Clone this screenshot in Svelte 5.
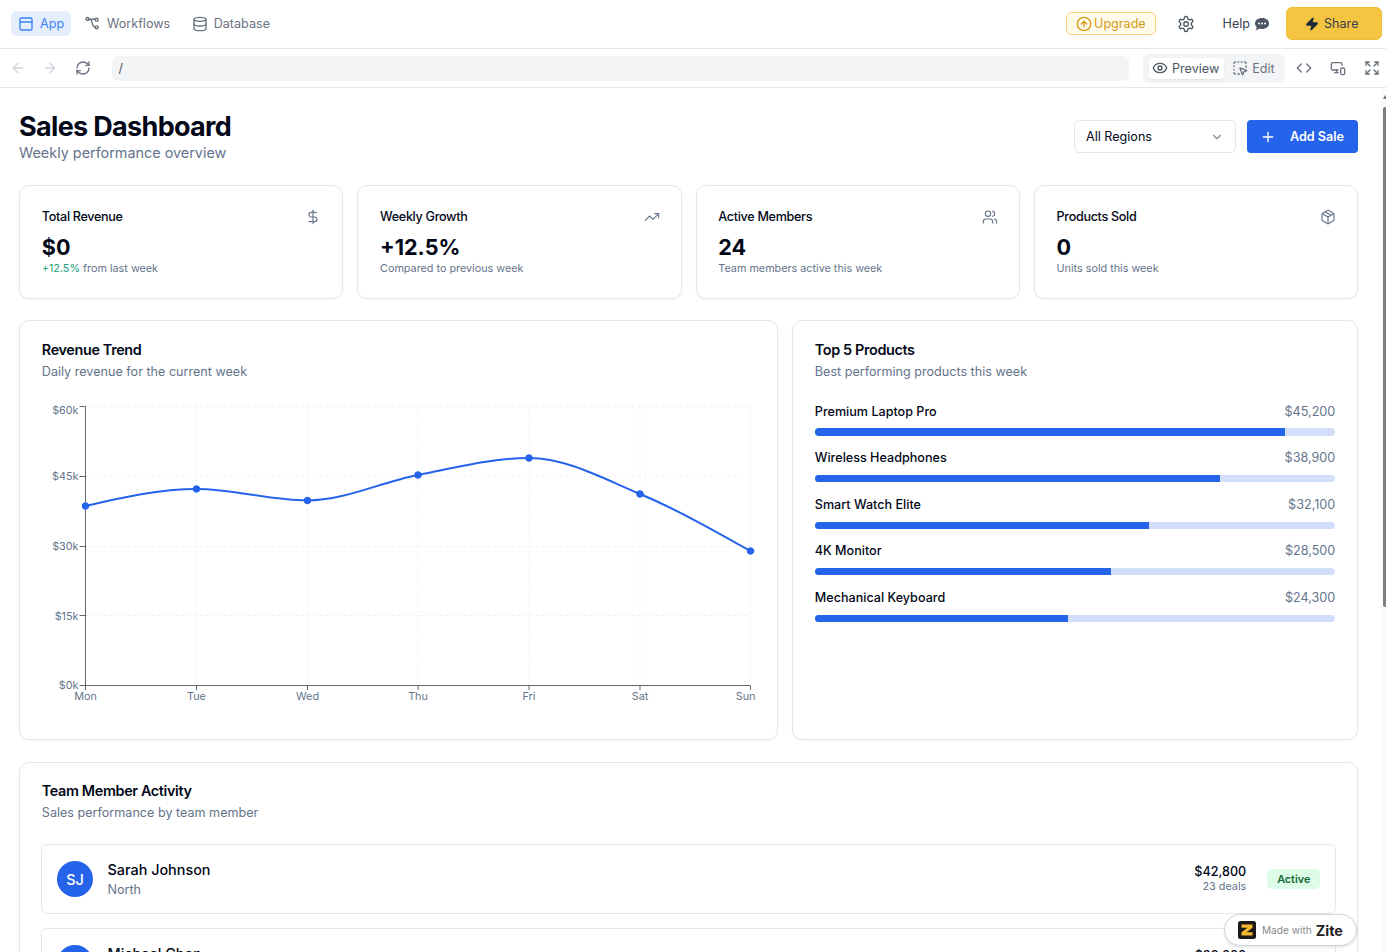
<script>
  const pts = [[85.5,506],[196.5,489],[307.5,500.5],[418,475],[529,458],[640,494],[750.5,551]];
  const ox = 41, oy = 398;
  const X = (x) => x - ox;
  const Y = (y) => y - oy;
  function sign(v) { return v < 0 ? -1 : 1; }
  function monotone(p) {
    const n = p.length;
    const m = new Array(n).fill(0);
    const h = [], s = [];
    for (let i = 0; i < n - 1; i++) {
      h[i] = p[i + 1][0] - p[i][0];
      s[i] = (p[i + 1][1] - p[i][1]) / h[i];
    }
    for (let i = 1; i < n - 1; i++) {
      const t = (s[i - 1] * h[i] + s[i] * h[i - 1]) / (h[i - 1] + h[i]);
      m[i] = (sign(s[i - 1]) + sign(s[i])) * Math.min(Math.abs(s[i - 1]), Math.abs(s[i]), 0.5 * Math.abs(t)) || 0;
    }
    m[0] = (3 * s[0] - m[1]) / 2;
    m[n - 1] = (3 * s[n - 2] - m[n - 2]) / 2;
    let d = `M${X(p[0][0])},${Y(p[0][1])}`;
    for (let i = 0; i < n - 1; i++) {
      const dx = h[i] / 3;
      d += `C${X(p[i][0] + dx)},${Y(p[i][1] + m[i] * dx)},${X(p[i + 1][0] - dx)},${Y(p[i + 1][1] - m[i + 1] * dx)},${X(p[i + 1][0])},${Y(p[i + 1][1])}`;
    }
    return d;
  }
  const linePath = monotone(pts);
  const yTicks = [
    { label: '$60k', y: 406.5, base: 414 },
    { label: '$45k', y: 476.5, base: 480 },
    { label: '$30k', y: 546.5, base: 550 },
    { label: '$15k', y: 615.5, base: 620 },
    { label: '$0k', y: 685.5, base: 689 }
  ];
  const xLabels = ['Mon','Tue','Wed','Thu','Fri','Sat','Sun'];
  const stats = [
    { title: 'Total Revenue', value: '$0', icon: 'dollar', growth: '+12.5%', note: ' from last week' },
    { title: 'Weekly Growth', value: '+12.5%', icon: 'trend', note: 'Compared to previous week' },
    { title: 'Active Members', value: '24', icon: 'users', note: 'Team members active this week' },
    { title: 'Products Sold', value: '0', icon: 'box', note: 'Units sold this week' }
  ];
  const products = [
    { name: 'Premium Laptop Pro', sales: '$45,200', pct: 90.4 },
    { name: 'Wireless Headphones', sales: '$38,900', pct: 77.8 },
    { name: 'Smart Watch Elite', sales: '$32,100', pct: 64.2 },
    { name: '4K Monitor', sales: '$28,500', pct: 57 },
    { name: 'Mechanical Keyboard', sales: '$24,300', pct: 48.6 }
  ];
  const members = [
    { initials: 'SJ', name: 'Sarah Johnson', region: 'North', amount: '$42,800', deals: '23 deals' },
    { initials: 'MC', name: 'Michael Chen', region: 'South', amount: '$38,200', deals: '19 deals' }
  ];
</script>

<div class="shell">
  <header class="topbar">
    <nav class="tabs">
      <div class="tab active">
        <svg class="ic16" viewBox="0 0 24 24"><rect x="3" y="3" width="18" height="18" rx="2"/><path d="M3 9h18"/></svg>
        <span>App</span>
      </div>
      <div class="tab">
        <svg class="ic16 wf" viewBox="0 0 24 24"><circle cx="3.800" cy="4.500" r="2.200"/><circle cx="17.500" cy="5.500" r="2.200"/><circle cx="17.500" cy="17" r="2.200"/><path d="M6 5h9.300"/><path d="M8 5c3.500 1 2 12 7.300 12"/></svg>
        <span>Workflows</span>
      </div>
      <div class="tab">
        <svg class="ic16" viewBox="0 0 24 24"><ellipse cx="12" cy="5" rx="9" ry="3"/><path d="M3 5V19A9 3 0 0 0 21 19V5"/><path d="M3 12A9 3 0 0 0 21 12"/></svg>
        <span>Database</span>
      </div>
    </nav>
    <div class="top-actions">
      <div class="upgrade">
        <svg class="ic16" viewBox="0 0 24 24"><circle cx="12" cy="12" r="10"/><path d="m16 12-4-4-4 4"/><path d="M12 16V8"/></svg>
        <span>Upgrade</span>
      </div>
      <svg class="gear" viewBox="0 0 24 24"><path d="M12.22 2h-.44a2 2 0 0 0-2 2v.18a2 2 0 0 1-1 1.730l-.43.25a2 2 0 0 1-2 0l-.15-.08a2 2 0 0 0-2.730.73l-.22.38a2 2 0 0 0 .73 2.730l.15.1a2 2 0 0 1 1 1.720v.51a2 2 0 0 1-1 1.740l-.15.09a2 2 0 0 0-.73 2.730l.22.38a2 2 0 0 0 2.730.73l.15-.08a2 2 0 0 1 2 0l.43.25a2 2 0 0 1 1 1.730V20a2 2 0 0 0 2 2h.44a2 2 0 0 0 2-2v-.18a2 2 0 0 1 1-1.730l.43-.25a2 2 0 0 1 2 0l.15.08a2 2 0 0 0 2.730-.73l.22-.39a2 2 0 0 0-.73-2.730l-.15-.08a2 2 0 0 1-1-1.740v-.5a2 2 0 0 1 1-1.740l.15-.09a2 2 0 0 0 .73-2.730l-.22-.38a2 2 0 0 0-2.730-.73l-.15.08a2 2 0 0 1-2 0l-.43-.25a2 2 0 0 1-1-1.730V4a2 2 0 0 0-2-2z"/><circle cx="12" cy="12" r="3"/></svg>
      <div class="help">
        <span>Help</span>
        <svg class="chat" viewBox="0 0 16 16"><path d="M8 2c4 0 7 2.300 7 5.500S12 13 8 13c-.900 0-1.800-.1-2.600-.4C4.500 13.400 3 14 1.800 14c-.2 0-.3-.3-.1-.4.600-.6 1-1.400 1.100-2.300C1.700 10.300 1 9 1 7.500 1 4.300 4 2 8 2z"/><circle class="dot" cx="5" cy="7.500" r="1"/><circle class="dot" cx="8" cy="7.500" r="1"/><circle class="dot" cx="11" cy="7.500" r="1"/></svg>
      </div>
      <div class="share">
        <svg class="zap" viewBox="0 0 24 24"><path d="M4 14a1 1 0 0 1-.78-1.630l9.900-10.200a.5.5 0 0 1 .86.46l-1.920 6.020A1 1 0 0 0 13 10h7a1 1 0 0 1 .78 1.630l-9.900 10.200a.5.5 0 0 1-.86-.46l1.920-6.020A1 1 0 0 0 11 14z"/></svg>
        <span>Share</span>
      </div>
    </div>
  </header>

  <div class="urlbar">
    <div class="nav-icons">
      <svg class="ic16 faint" viewBox="0 0 24 24"><path d="m12 19-7-7 7-7"/><path d="M19 12H5"/></svg>
      <svg class="ic16 faint" viewBox="0 0 24 24"><path d="M5 12h14"/><path d="m12 5 7 7-7 7"/></svg>
      <svg class="ic16 dim reload" viewBox="0 0 24 24"><path d="M3 12a9 9 0 0 1 9-9 9.750 9.750 0 0 1 6.740 2.740L21 8"/><path d="M21 3v5h-5"/><path d="M21 12a9 9 0 0 1-9 9 9.750 9.750 0 0 1-6.740-2.740L3 16"/><path d="M8 16H3v5"/></svg>
    </div>
    <div class="address">/</div>
    <div class="mode">
      <div class="mode-btn on">
        <svg class="ic16" viewBox="0 0 24 24"><path d="M2.062 12.348a1 1 0 0 1 0-.696 10.750 10.750 0 0 1 19.876 0 1 1 0 0 1 0 .696 10.750 10.750 0 0 1-19.876 0"/><circle cx="12" cy="12" r="3"/></svg>
        <span>Preview</span>
      </div>
      <div class="mode-btn">
        <svg class="ic16" viewBox="0 0 24 24"><path d="M12.034 12.681a.498.498 0 0 1 .647-.647l9 3.500a.5.5 0 0 1-.033.943l-3.444 1.068a1 1 0 0 0-.66.66l-1.067 3.443a.5.5 0 0 1-.943.033z"/><path d="M5 3a2 2 0 0 0-2 2"/><path d="M19 3a2 2 0 0 1 2 2"/><path d="M5 21a2 2 0 0 1-2-2"/><path d="M9 3h1"/><path d="M9 21h2"/><path d="M14 3h1"/><path d="M3 9v1"/><path d="M21 9v2"/><path d="M3 14v1"/></svg>
        <span>Edit</span>
      </div>
    </div>
    <div class="tools">
      <svg class="ic16 dim" viewBox="0 0 24 24"><path d="m16 18 6-6-6-6"/><path d="m8 6-6 6 6 6"/></svg>
      <svg class="ic16 dim" viewBox="0 0 24 24"><path d="M18 8V6a2 2 0 0 0-2-2H4a2 2 0 0 0-2 2v7a2 2 0 0 0 2 2h8"/><path d="M10 19v-3.960 3.150"/><path d="M7 19h5"/><rect x="16" y="12" width="6" height="10" rx="2"/></svg>
      <svg class="ic16 dim" viewBox="0 0 24 24"><path d="m15 15 6 6"/><path d="m15 9 6-6"/><path d="M21 16v5h-5"/><path d="M21 8V3h-5"/><path d="M3 16v5h5"/><path d="m3 21 6-6"/><path d="M3 8V3h5"/><path d="M9 9 3 3"/></svg>
    </div>
  </div>

  <div class="viewport">
    <main class="page">
      <section class="head">
        <div>
          <h1>Sales Dashboard</h1>
          <p class="sub">Weekly performance overview</p>
        </div>
        <div class="head-actions">
          <div class="select">
            <span>All Regions</span>
            <svg class="ic14 chev" viewBox="0 0 24 24"><path d="m6 9 6 6 6-6"/></svg>
          </div>
          <div class="add">
            <svg class="ic16" viewBox="0 0 24 24"><path d="M5 12h14"/><path d="M12 5v14"/></svg>
            <span>Add Sale</span>
          </div>
        </div>
      </section>

      <section class="stats">
        {#each stats as s}
          <article class="card stat">
            <div class="stat-top">
              <span class="stat-title">{s.title}</span>
              <svg class="ic16 stat-ic" viewBox="0 0 24 24">
                {#if s.icon === 'dollar'}
                  <path d="M12 2v20"/><path d="M17 5H9.500a3.500 3.500 0 0 0 0 7h5a3.500 3.500 0 0 1 0 7H6"/>
                {:else if s.icon === 'trend'}
                  <path d="M22 7l-8.500 8.500-5-5L2 17"/><path d="M16 7h6v6"/>
                {:else if s.icon === 'users'}
                  <path d="M16 21v-2a4 4 0 0 0-4-4H6a4 4 0 0 0-4 4v2"/><circle cx="9" cy="7" r="4"/><path d="M22 21v-2a4 4 0 0 0-3-3.870"/><path d="M16 3.130a4 4 0 0 1 0 7.750"/>
                {:else}
                  <path d="m7.500 4.270 9 5.150"/><path d="M21 8a2 2 0 0 0-1-1.730l-7-4a2 2 0 0 0-2 0l-7 4A2 2 0 0 0 3 8v8a2 2 0 0 0 1 1.730l7 4a2 2 0 0 0 2 0l7-4A2 2 0 0 0 21 16Z"/><path d="m3.300 7 8.700 5 8.700-5"/><path d="M12 22V12"/>
                {/if}
              </svg>
            </div>
            <div class="stat-value">{s.value}</div>
            <div class="stat-note">{#if s.growth}<span class="growth">{s.growth}</span>{/if}{s.note}</div>
          </article>
        {/each}
      </section>

      <section class="charts">
        <article class="card panel">
          <h2>Revenue Trend</h2>
          <p class="panel-sub">Daily revenue for the current week</p>
          <svg class="chart" viewBox="0 0 712 312" width="712" height="312">
            {#each yTicks as t, i}
              {#if i < 4}<line class="grid" x1={X(85.5)} x2={X(750.5)} y1={Y(t.y)} y2={Y(t.y)}/>{/if}
            {/each}
            {#each pts as p, i}
              {#if i > 0}<line class="grid" x1={X(p[0])} x2={X(p[0])} y1={Y(406.5)} y2={Y(685.5)}/>{/if}
            {/each}
            <line class="axis" x1={X(85.5)} x2={X(85.5)} y1={Y(406.5)} y2={Y(686)}/>
            <line class="axis" x1={X(85.5)} x2={X(750.5)} y1={Y(685.5)} y2={Y(685.5)}/>
            {#each yTicks as t}
              <line class="axis" x1={X(79.5)} x2={X(85.5)} y1={Y(t.y)} y2={Y(t.y)}/>
              <text class="tick" x={X(78.5)} y={Y(t.base)} text-anchor="end">{t.label}</text>
            {/each}
            {#each pts as p, i}
              <line class="axis" x1={X(p[0])} x2={X(p[0])} y1={Y(686)} y2={Y(690)}/>
              <text class="tick" x={i === 6 ? X(755.5) : X(p[0])} y={Y(700)} text-anchor={i === 6 ? 'end' : 'middle'}>{xLabels[i]}</text>
            {/each}
            <path class="line" d={linePath}/>
            {#each pts as p}
              <circle class="pt" cx={X(p[0])} cy={Y(p[1])} r="3.3"/>
            {/each}
          </svg>
        </article>

        <article class="card panel">
          <h2>Top 5 Products</h2>
          <p class="panel-sub">Best performing products this week</p>
          <div class="products">
            {#each products as p}
              <div class="product">
                <div class="product-row">
                  <span class="pname">{p.name}</span>
                  <span class="psales">{p.sales}</span>
                </div>
                <div class="track"><div class="fill" style="width:{p.pct}%"></div></div>
              </div>
            {/each}
          </div>
        </article>
      </section>

      <section class="card team">
        <h2>Team Member Activity</h2>
        <p class="panel-sub">Sales performance by team member</p>
        <div class="members">
          {#each members as m}
            <div class="member">
              <div class="avatar">{m.initials}</div>
              <div class="who">
                <div class="mname">{m.name}</div>
                <div class="mregion">{m.region}</div>
              </div>
              <div class="money">
                <div class="amount">{m.amount}</div>
                <div class="deals">{m.deals}</div>
              </div>
              <div class="badge">Active</div>
            </div>
          {/each}
        </div>
      </section>
    </main>

    <div class="scrollbar"><div class="sb-arrow"></div><div class="sb-thumb"></div></div>

    <div class="zite">
      <svg class="zlogo" viewBox="0 0 18 18"><rect width="18" height="18" rx="2.500" fill="#1c1a17"/><path d="M3.500 3.500h11v3.200l-6 4.600h6v3.200h-11v-3.200l6-4.600h-6z" fill="#f5b82e"/></svg>
      <span class="made">Made with</span>
      <span class="zname">Zite</span>
    </div>
  </div>
</div>

<style>
  :global(html, body) { margin: 0; height: 100%; overflow: hidden; background: #fff; }
  * { box-sizing: border-box; }
  .shell {
    width: 1386px; height: 952px; display: flex; flex-direction: column; overflow: hidden;
    font-family: Inter, "Liberation Sans", sans-serif; color: #020817; background: #fff;
  }
  svg { fill: none; stroke: currentColor; stroke-width: 2; stroke-linecap: round; stroke-linejoin: round; flex: none; display: block; }
  .ic16 { width: 16px; height: 16px; }
  .ic14 { width: 14px; height: 14px; }
  .wf { stroke-width: 2.200; }

  .topbar { height: 49px; flex: none; display: flex; align-items: center; justify-content: space-between; padding: 0 4px 1px 11px; border-bottom: 1px solid #e5e7eb; }
  .tabs { display: flex; align-items: center; }
  .tab { display: flex; align-items: center; gap: 6px; height: 25px; padding: 0 7px; border-radius: 6px; font-size: 12.6px; color: #6b7280; }
  .tab.active { color: #3b82f6; background: #e3edfc; width: 60px; margin-right: 7px; }
  .tab:nth-child(2) { margin-right: 7.500px; }
  .top-actions { display: flex; align-items: center; }
  .upgrade { width: 90px; height: 23px; margin-right: 21px; display: flex; align-items: center; gap: 2.500px; padding-left: 9px; border: 1px solid #fcd57a; background: #fffbeb; border-radius: 5px; font-size: 12.6px; color: #d49a12; }
  .gear { width: 18px; height: 18px; color: #4b5563; margin-right: 28px; stroke-width: 1.800; }
  .help { display: flex; align-items: center; gap: 4px; font-size: 12.6px; color: #374151; margin-right: 16px; }
  .chat { width: 16px; height: 16px; fill: #4b5563; stroke: none; }
  .chat .dot { fill: #fff; }
  .share { width: 96px; height: 33px; display: flex; align-items: center; gap: 4px; padding-left: 18px; background: #f5c542; border: 1px solid #efbd36; border-radius: 6px; font-size: 12.6px; color: #374151; }
  .zap { width: 14px; height: 14px; fill: #1f2937; stroke: #1f2937; margin-right: 1px; }

  .urlbar { height: 39px; flex: none; display: flex; align-items: center; border-bottom: 1px solid #e5e7eb; padding-left: 10px; }
  .nav-icons { display: flex; align-items: center; gap: 16px; width: 102px; flex: none; }
  .reload { margin-left: 1px; }
  .faint { color: #d1d5db; }
  .dim { color: #6b7280; }
  .address { flex: none; width: 1017px; height: 25px; background: #f3f4f6; border-radius: 6px; padding-left: 6.500px; font-size: 12.6px; line-height: 25px; color: #4b5563; }
  .mode { flex: none; margin-left: 14px; width: 142px; height: 29px; background: #f3f4f6; border-radius: 6px; display: flex; align-items: center; padding: 0 6px; }
  .mode-btn { display: flex; align-items: center; gap: 4.500px; height: 21px; font-size: 12.6px; color: #6b7280; padding-left: 3.700px; }
  .mode-btn.on { background: #fff; border-radius: 4px; color: #4b5563; box-shadow: 0 1px 2px rgba(0,0,0,.08); width: 75px; padding-left: 2.500px; margin-right: 4px; }
  .tools { flex: none; display: flex; align-items: center; gap: 18px; margin-left: 10.500px; }

  .viewport { flex: 1; min-height: 0; position: relative; overflow: hidden; }
  .page { width: 1381px; padding: 0 23px 0 19px; }
  .head { height: 97px; display: flex; justify-content: space-between; padding-top: 22px; }
  h1 { margin: 1px 0 0; font-size: 27px; line-height: 31px; font-weight: 700; letter-spacing: -0.675px; color: #020817; }
  .sub { margin: 0; font-size: 14.4px; line-height: 22px; color: #64748b; }
  .head-actions { display: flex; gap: 11px; padding-top: 10px; }
  .select { width: 162px; height: 33px; border: 1px solid #e2e8f0; border-radius: 5px; padding: 0 11px; display: flex; align-items: center; justify-content: space-between; font-size: 12.6px; color: #020817; background: #fff; }
  .chev { color: #64748b; opacity: .8; }
  .add { width: 111px; height: 33px; border-radius: 4px; background: #2563eb; color: #fff; display: flex; align-items: center; gap: 14px; padding-left: 13px; font-size: 12.6px; font-weight: 600; }

  .card { background: #fff; border: 1px solid #e2e8f0; border-radius: 10px; box-shadow: 0 1px 2px rgba(15,23,42,.05); }
  .stats { display: grid; grid-template-columns: repeat(4, 1fr); gap: 14px; }
  .stat { height: 114px; padding: 22px 21.800px 0; }
  .stat-top { display: flex; justify-content: space-between; align-items: center; height: 16px; }
  .stat-title { font-size: 12.6px; font-weight: 500; color: #020817; letter-spacing: -0.315px; }
  .stat-ic { color: #64748b; margin: 2px -1px 0 0; stroke-width: 1.700; }
  .stat-value { font-size: 21.6px; line-height: 28px; font-weight: 700; margin-top: 9px; color: #020817; }
  .stat-note { font-size: 10.8px; line-height: 14px; margin-top: 1px; color: #64748b; }
  .growth { color: #16a37a; }

  .charts { display: grid; grid-template-columns: 759px 1fr; gap: 14px; margin-top: 21px; }
  .panel { height: 420px; padding: 20px 21.800px; position: relative; }
  h2 { margin: 0; font-size: 14.4px; line-height: 18px; font-weight: 600; letter-spacing: -0.36px; color: #020817; }
  .panel-sub { margin: 4px 0 0; font-size: 12.6px; line-height: 18px; color: #64748b; }
  .chart { margin: 17px 0 0 -0.800px; overflow: visible; }
  .chart .grid { stroke: #eef0f3; stroke-width: 1; stroke-dasharray: 3 3; stroke-linecap: butt; }
  .chart .axis { stroke: #666; stroke-width: 1; stroke-linecap: butt; }
  .chart .tick { fill: #64748b; stroke: none; font-size: 10.8px; }
  .chart .line { stroke: #2563eb; stroke-width: 2; fill: none; }
  .chart .pt { fill: #2563eb; stroke: #2563eb; stroke-width: 1; }

  .products { display: flex; flex-direction: column; gap: 10.800px; margin-top: 19.300px; }
  .product-row { display: flex; justify-content: space-between; align-items: center; height: 21.600px; }
  .pname { font-size: 12.6px; font-weight: 500; color: #020817; }
  .psales { font-size: 12.6px; color: #64748b; }
  .track { height: 7.200px; margin-top: 6.600px; margin-bottom: 0.400px; border-radius: 4px; background: #d3dffa; overflow: hidden; }
  .fill { height: 100%; background: #2563eb; }

  .team { margin-top: 22px; padding: 19px 21.800px 22px; }
  .members { display: flex; flex-direction: column; gap: 14px; margin: 22px -1px 0 -0.800px; }
  .member { height: 70px; border: 1px solid #e2e8f0; border-radius: 6px; padding: 0 15px; display: flex; align-items: center; }
  .avatar { width: 36px; height: 36px; border-radius: 50%; background: #2563eb; color: #fff; font-size: 14.4px; display: flex; align-items: center; justify-content: center; font-weight: 500; }
  .who { margin-left: 14.500px; flex: 1; }
  .mname { font-size: 14.4px; line-height: 20px; font-weight: 500; color: #020817; }
  .mregion { font-size: 12.6px; line-height: 18px; color: #64748b; margin-top: 1px; }
  .money { text-align: right; margin-right: 21px; }
  .amount { font-size: 12.6px; line-height: 16px; font-weight: 500; color: #020817; }
  .deals { font-size: 10.8px; line-height: 14px; color: #64748b; }
  .badge { width: 53px; height: 20px; border-radius: 5px; background: #dcfce7; color: #166534; font-size: 10.8px; font-weight: 600; display: flex; align-items: center; justify-content: center; }

  .scrollbar { position: absolute; right: 0; top: 0; bottom: 0; width: 5px; background: #fafafa; }
  .sb-arrow { position: absolute; top: 7px; left: 1.500px; width: 0; height: 0; border-left: 2.500px solid transparent; border-right: 2.500px solid transparent; border-bottom: 4px solid #777; }
  .sb-thumb { position: absolute; top: 19px; left: 2px; right: 0; height: 500px; background: #7f7f7f; border-radius: 2px 0 0 2px; }

  .zite { position: absolute; left: 1224px; top: 826px; width: 133px; height: 32px; border: 1px solid #d1d5db; border-radius: 16px; background: #fff; box-shadow: 0 1px 3px rgba(0,0,0,.12); display: flex; align-items: center; padding-left: 13px; }
  .zlogo { width: 18px; height: 18px; stroke: none; margin-right: 6px; }
  .made { font-size: 10.1px; color: #8a8a8a; margin-right: 4px; }
  .zname { font-size: 14.4px; font-weight: 700; color: #222; }
</style>
